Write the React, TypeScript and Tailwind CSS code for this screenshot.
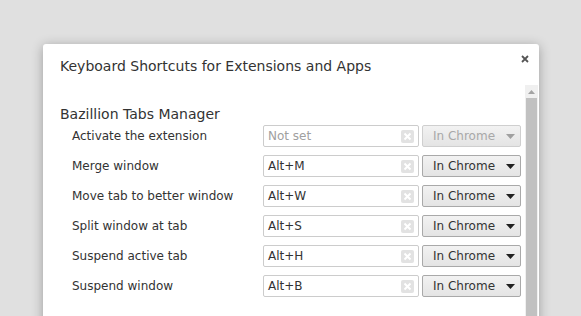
import React from "react";

const ROWS = [
  { label: "Activate the extension", value: "", disabled: true },
  { label: "Merge window", value: "Alt+M" },
  { label: "Move tab to better window", value: "Alt+W" },
  { label: "Split window at tab", value: "Alt+S" },
  { label: "Suspend active tab", value: "Alt+H" },
  { label: "Suspend window", value: "Alt+B" },
];

function ClearIcon() {
  return (
    <span className="grid h-[13px] w-[13px] place-items-center rounded-[2px] bg-[#e2e2e2]">
      <svg width="9" height="9" viewBox="0 0 9 9">
        <path d="M1.5 1.5 L7.5 7.5 M7.5 1.5 L1.5 7.5" stroke="#fff" strokeWidth="2" />
      </svg>
    </span>
  );
}

function Row({ label, value, disabled }: { label: string; value: string; disabled?: boolean }) {
  return (
    <div className="flex h-[22px] items-center">
      <div className="w-[203px] pl-3 text-[12px] leading-none text-[#333]">{label}</div>
      <div className="flex h-[22px] w-[156px] items-center justify-between rounded-[2px] border border-[#cccccc] bg-white pl-[4px] pr-[4px]">
        <span className={disabled ? "text-[12px] text-[#a0a0a0]" : "text-[12px] text-[#333]"}>
          {value || "Not set"}
        </span>
        <ClearIcon />
      </div>
      <div
        className={
          "ml-[3px] flex h-[22px] w-[99px] items-center justify-between rounded-[2px] border bg-gradient-to-b from-[#f2f2f2] to-[#e4e4e4] pl-[10px] pr-[5px] " +
          (disabled ? "border-[#cfcfcf]" : "border-[#a9a9a9]")
        }
      >
        <span className={disabled ? "text-[12px] text-[#a8a8a8]" : "text-[12px] text-[#333]"}>In Chrome</span>
        <svg width="9" height="5" viewBox="0 0 9 5">
          <path d="M0 0 H9 L4.5 5 Z" fill={disabled ? "#a0a0a0" : "#222"} />
        </svg>
      </div>
    </div>
  );
}

export default function App() {
  return (
    <div
      className="h-[316px] w-[581px] overflow-hidden bg-[#e0e0e0] pl-[43px] pt-[44px]"
      style={{ fontFamily: '"DejaVu Sans", sans-serif' }}
    >
      <div className="relative h-[300px] w-[496px] rounded-t-[3px] bg-white shadow-[0_2px_12px_rgba(0,0,0,0.3)]">
        <svg className="absolute right-[10px] top-[11px]" width="8" height="8" viewBox="0 0 8 8">
          <path d="M1 1 L7 7 M7 1 L1 7" stroke="#555" strokeWidth="1.8" />
        </svg>
        <div className="px-[17px] pt-[12px] text-[14px] text-[#333]">Keyboard Shortcuts for Extensions and Apps</div>
        <div className="mt-[8px] flex">
          <div className="flex-1 pl-[17px]">
            <div className="pt-[22px] text-[14px] leading-none text-[#333]">Bazillion Tabs Manager</div>
            <div className="mt-[4px] flex flex-col gap-[8px]">
              {ROWS.map((r) => (
                <Row key={r.label} {...r} />
              ))}
            </div>
          </div>
          <div className="mr-[1px] flex w-[13px] flex-col bg-[#f0f0f0]">
            <div className="grid h-[13px] place-items-center">
              <svg width="7" height="4" viewBox="0 0 7 4">
                <path d="M0 4 H7 L3.5 0 Z" fill="#a3a3a3" />
              </svg>
            </div>
            <div className="mx-[1px] h-[220px] bg-[#c1c1c1]" />
          </div>
        </div>
      </div>
    </div>
  );
}
